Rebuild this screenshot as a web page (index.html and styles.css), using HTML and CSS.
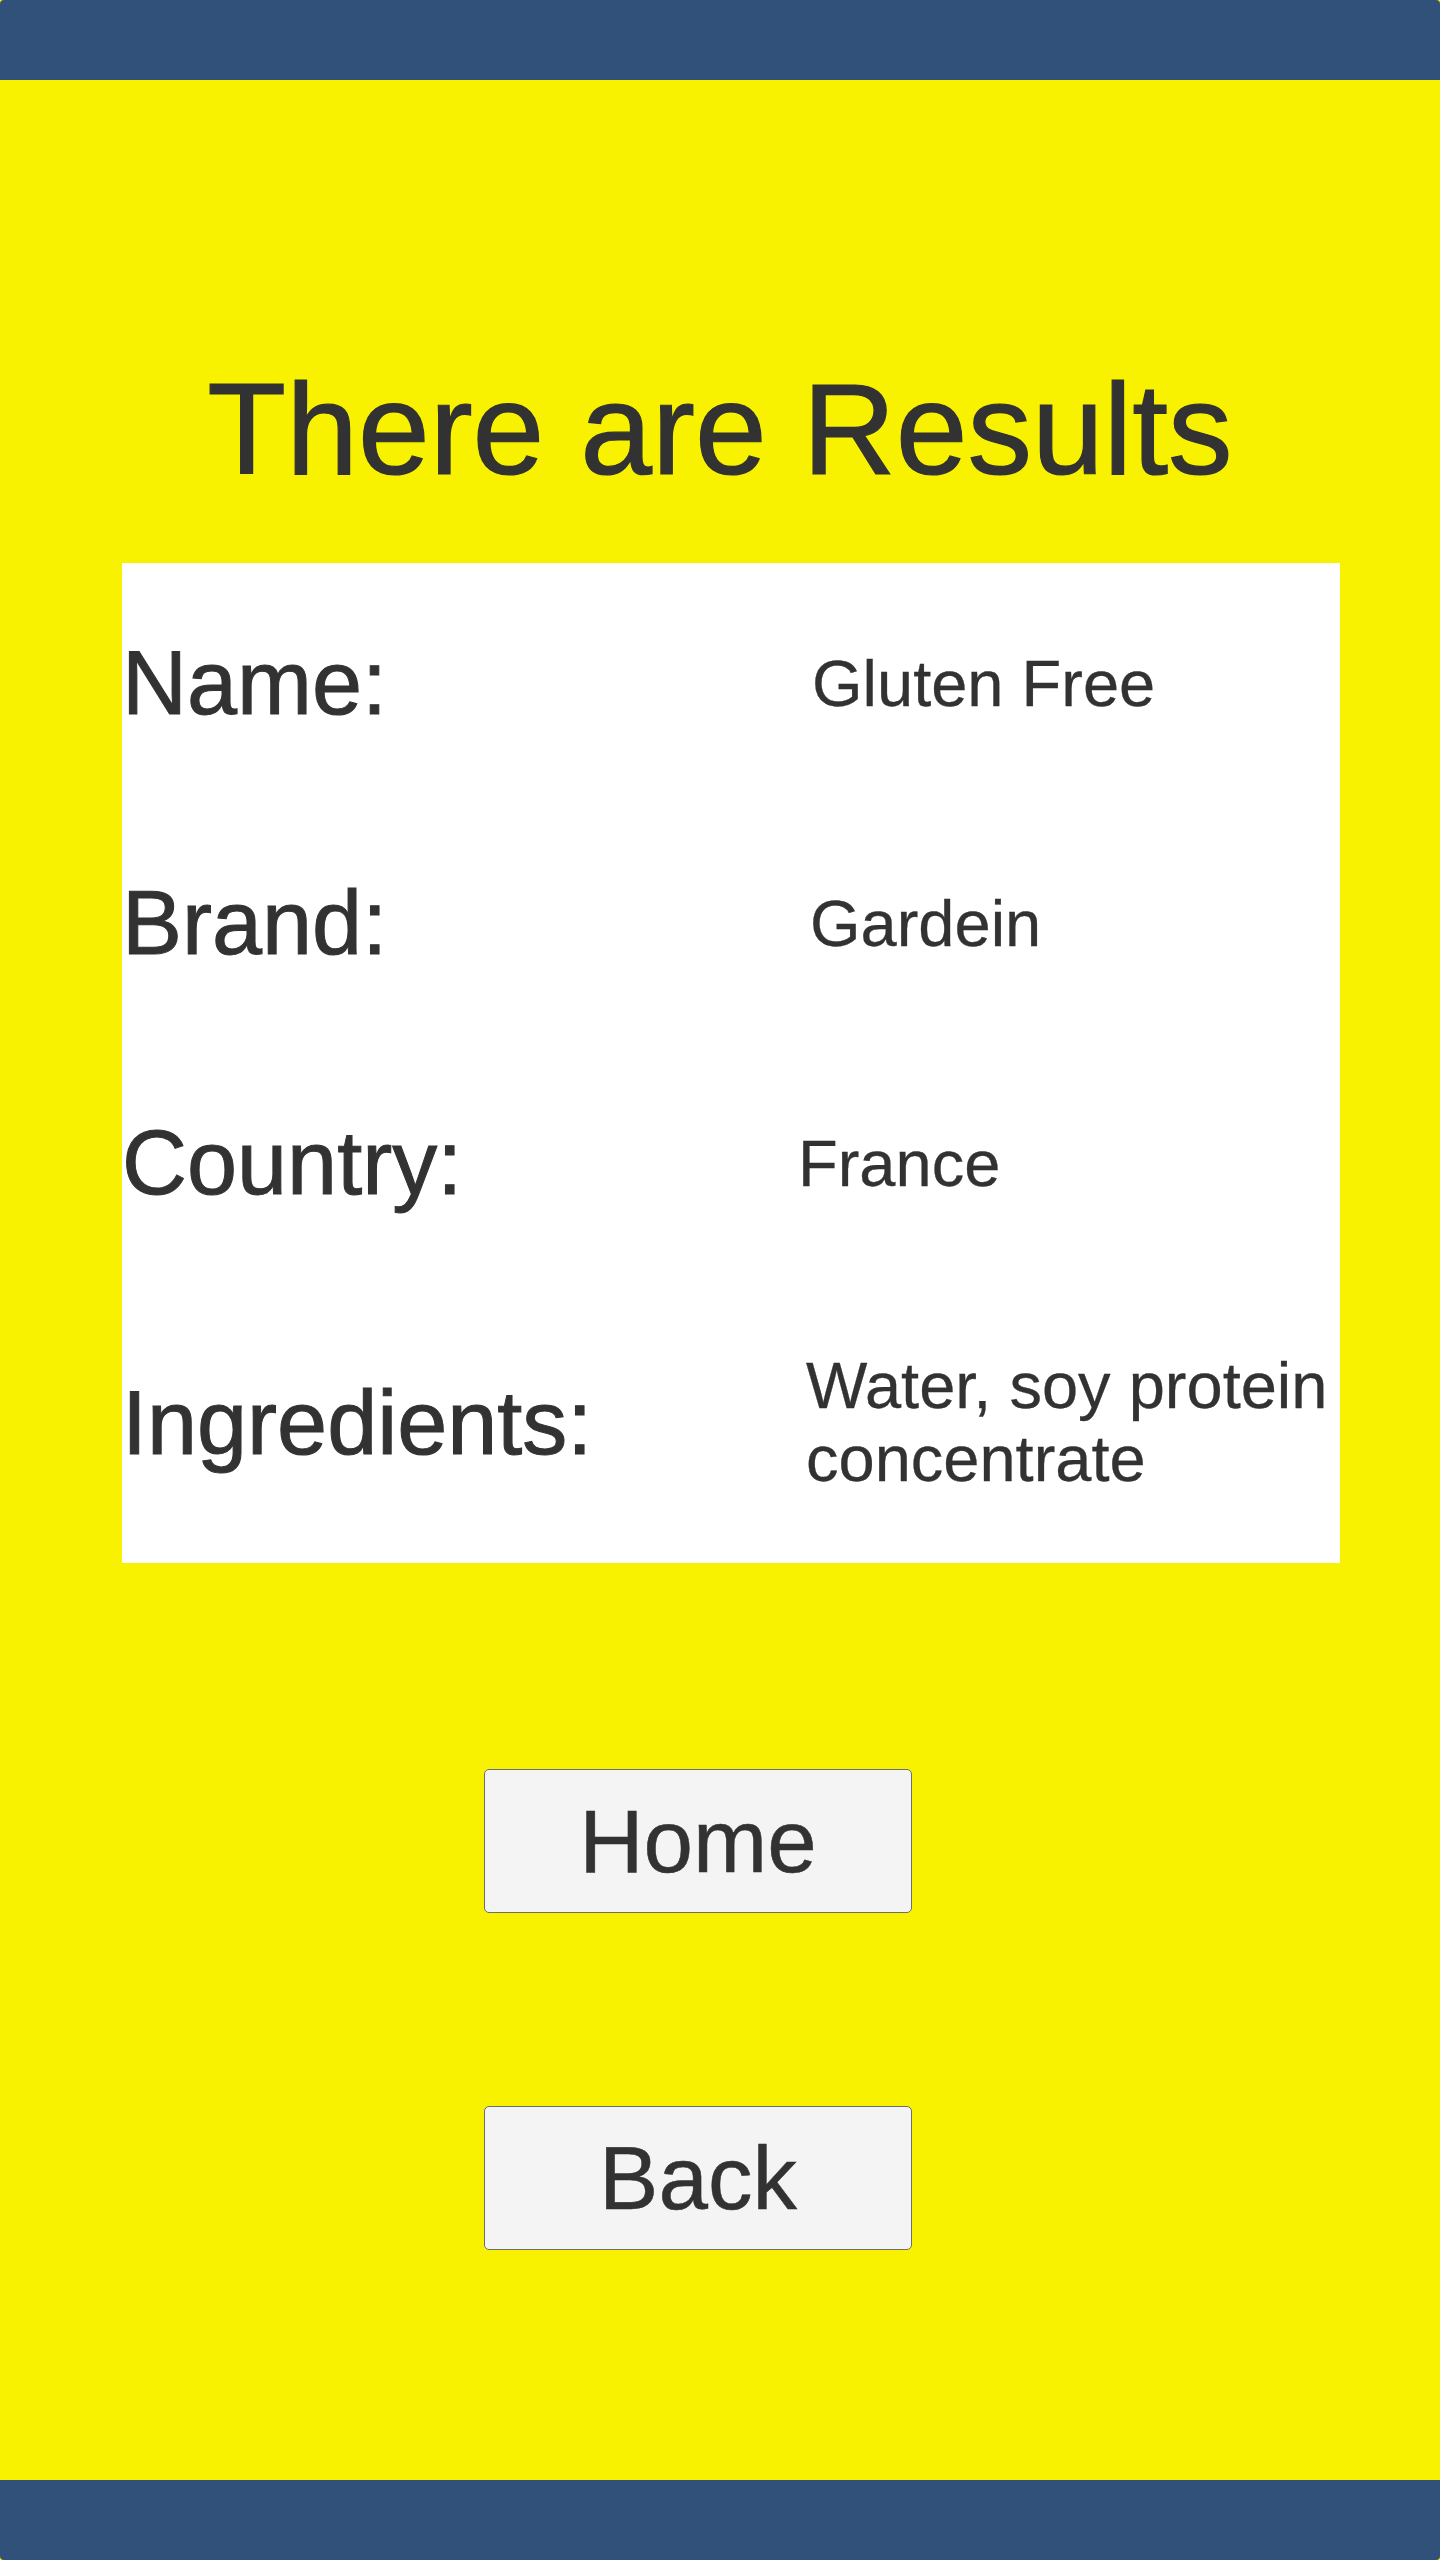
FILE: index.html
```html
<!DOCTYPE html>
<html lang="en">
<head>
<meta charset="utf-8">
<title>Results</title>
<link rel="stylesheet" href="styles.css">
</head>
<body>
<div class="screen">
  <header class="topbar"></header>
  <main class="content">
    <h1 class="title">There are Results</h1>
    <section class="card">
      <div class="row">
        <div class="label">Name:</div>
        <div class="value">Gluten Free</div>
      </div>
      <div class="row">
        <div class="label">Brand:</div>
        <div class="value value--brand">Gardein</div>
      </div>
      <div class="row">
        <div class="label">Country:</div>
        <div class="value value--country">France</div>
      </div>
      <div class="row">
        <div class="label">Ingredients:</div>
        <div class="value value--ingredients">Water, soy protein concentrate</div>
      </div>
    </section>
    <nav class="actions">
      <button class="btn btn--home" type="button">Home</button>
      <button class="btn btn--back" type="button">Back</button>
    </nav>
  </main>
  <footer class="bottombar"></footer>
</div>
</body>
</html>
```

FILE: styles.css
```css
html, body {
  margin: 0;
  padding: 0;
}

body {
  font-family: "Liberation Sans", Arial, sans-serif;
  color: #323232;
  background: #f8f200;
}

.screen {
  width: 1440px;
  height: 2560px;
  display: flex;
  flex-direction: column;
  background: #f8f200;
}

.topbar {
  height: 80px;
  flex: 0 0 80px;
  background: #31517b;
  border-radius: 4px 4px 0 0;
}

.bottombar {
  height: 80px;
  flex: 0 0 80px;
  background: #31517b;
  border-radius: 0 0 4px 4px;
}

.content {
  flex: 1;
  display: flex;
  flex-direction: column;
}

.title {
  margin: 285px 0 0 0;
  font-size: 129px;
  font-weight: normal;
  line-height: 1;
  text-align: center;
  color: #323232;
  -webkit-text-stroke: 1.2px #323232;
}

.card {
  margin: 69px 0 0 122px;
  width: 1218px;
  height: 1000px;
  background: #ffffff;
  display: grid;
  grid-template-rows: 240px 240px 240px 1fr;
}

.row {
  display: grid;
  grid-template-columns: 690px 1fr;
  align-items: center;
}

.label {
  font-size: 90px;
  line-height: 1;
  -webkit-text-stroke: 1px #323232;
}

.value {
  font-size: 65px;
  line-height: 73px;
  padding-right: 4px;
  -webkit-text-stroke: 0.3px #323232;
}

.value--brand {
  margin-left: -2px;
}

.value--country {
  margin-left: -14px;
}

.value--ingredients {
  margin-left: -6px;
  margin-top: -2px;
}

.actions {
  display: flex;
  flex-direction: column;
  align-items: flex-start;
  padding-left: 484px;
  margin-top: 206px;
  gap: 193px;
}

.btn {
  width: 428px;
  height: 144px;
  margin: 0;
  padding: 0;
  box-sizing: border-box;
  background: #f4f4f4;
  border: 1px solid #6e6e6e;
  border-radius: 5px;
  font-family: "Liberation Sans", Arial, sans-serif;
  font-size: 89px;
  line-height: 1;
  color: #323232;
  display: flex;
  align-items: center;
  justify-content: center;
  -webkit-text-stroke: 0.5px #323232;
}
```
